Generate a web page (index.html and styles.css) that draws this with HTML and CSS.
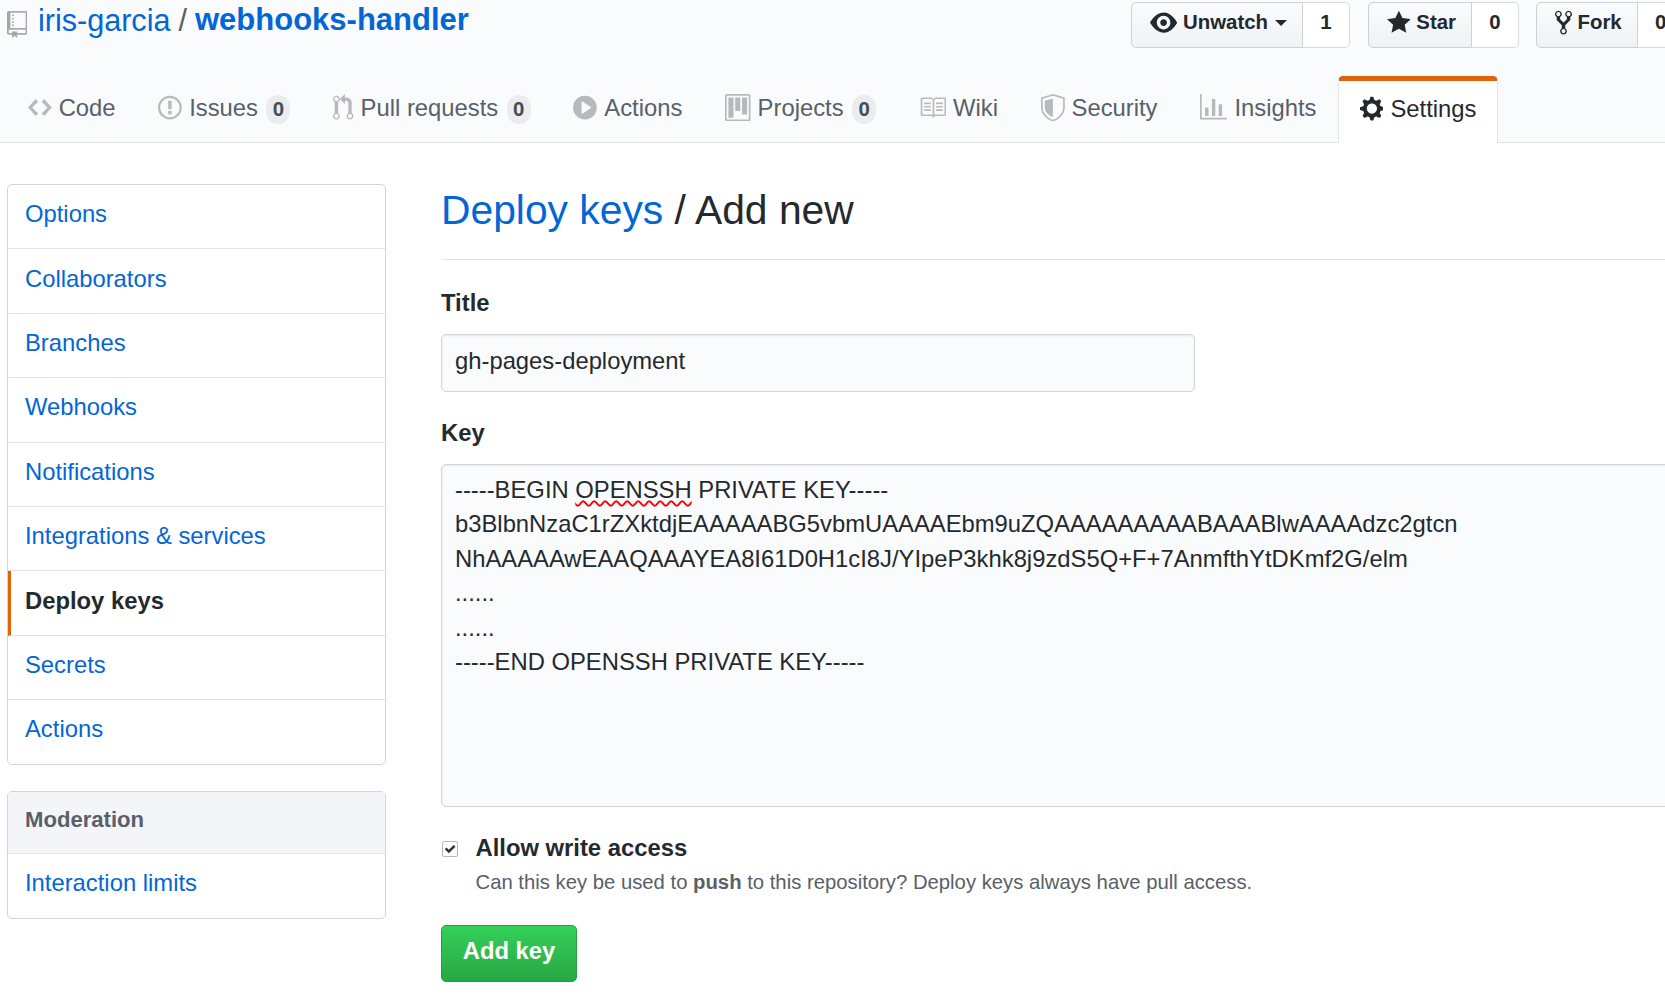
FILE: index.html
```html
<!DOCTYPE html>
<html lang="en">
<head>
<meta charset="utf-8">
<title>Deploy keys / Add new</title>
<link rel="stylesheet" href="styles.css">
</head>
<body>
<div class="page">
  <header class="repohead">
    <div class="repohead-top">
      <h1 class="repo-title">
        <svg class="repo-icon" viewBox="0 0 12 16"><path d="M4 9H3V8h1v1zm0-3H3v1h1V6zm0-2H3v1h1V4zm0-2H3v1h1V2zm8-1v12c0 .55-.45 1-1 1H6v2l-1.5-1.5L3 16v-2H1c-.55 0-1-.45-1-1V1c0-.55.45-1 1-1h10c.55 0 1 .45 1 1zm-1 10H1v2h2v-1h3v1h5v-2zm0-10H2v9h9V1z"/></svg>
        <a class="link owner">iris-garcia</a><span class="sep">/</span><a class="link repo">webhooks-handler</a>
      </h1>
      <ul class="actions">
        <li class="action">
          <span class="btn"><svg class="btn-icon eye" viewBox="0 0 16 16"><path d="M8.06 2C3 2 0 8 0 8s3 6 8.06 6C13 14 16 8 16 8s-3-6-7.94-6zM8 12c-2.2 0-4-1.78-4-4 0-2.2 1.8-4 4-4 2.22 0 4 1.8 4 4 0 2.22-1.78 4-4 4zm2-4c0 1.11-.89 2-2 2-1.11 0-2-.89-2-2 0-1.11.89-2 2-2 1.11 0 2 .89 2 2z"/></svg>Unwatch<i class="caret"></i></span><span class="count">1</span>
        </li>
        <li class="action">
          <span class="btn"><svg class="btn-icon star" viewBox="0 0 14 16"><path d="M14 6l-4.9-.64L7 1 4.9 5.36 0 6l3.6 3.26L2.67 14 7 11.67 11.33 14l-.93-4.74L14 6z"/></svg>Star</span><span class="count">0</span>
        </li>
        <li class="action">
          <span class="btn"><svg class="btn-icon fork" viewBox="0 0 10 16"><path d="M8 1a1.993 1.993 0 0 0-1 3.72V6L5 8 3 6V4.72A1.993 1.993 0 0 0 2 1a1.993 1.993 0 0 0-1 3.72V6.5l3 3v1.78A1.993 1.993 0 0 0 5 15a1.993 1.993 0 0 0 1-3.72V9.5l3-3V4.72A1.993 1.993 0 0 0 8 1zM2 4.2C1.34 4.2.8 3.65.8 3c0-.65.55-1.2 1.2-1.2.65 0 1.2.55 1.2 1.2 0 .65-.55 1.2-1.2 1.2zm3 10c-.66 0-1.2-.55-1.2-1.2 0-.65.55-1.2 1.2-1.2.65 0 1.2.55 1.2 1.2 0 .65-.55 1.2-1.2 1.2zm3-10c-.66 0-1.2-.55-1.2-1.2 0-.65.55-1.2 1.2-1.2.65 0 1.2.55 1.2 1.2 0 .65-.55 1.2-1.2 1.2z"/></svg>Fork</span><span class="count">0</span>
        </li>
      </ul>
    </div>
    <nav class="tabs">
      <a class="tab"><svg class="tab-icon w14" viewBox="0 0 14 16"><path d="M9.5 3L8 4.5 11.5 8 8 11.5 9.5 13 14 8 9.5 3zm-5 0L0 8l4.5 5L6 11.5 2.5 8 6 4.5 4.5 3z"/></svg>Code</a>
      <a class="tab"><svg class="tab-icon w14" viewBox="0 0 14 16"><path d="M7 2.3c3.14 0 5.7 2.56 5.7 5.7s-2.56 5.7-5.7 5.7A5.71 5.71 0 0 1 1.3 8c0-3.14 2.56-5.7 5.7-5.7zM7 1C3.14 1 0 4.14 0 8s3.14 7 7 7 7-3.14 7-7-3.14-7-7-7zm1 3H6v5h2V4zm0 6H6v2h2v-2z"/></svg>Issues<span class="counter">0</span></a>
      <a class="tab"><svg class="tab-icon w12" viewBox="0 0 12 16"><path d="M11 11.28V5c-.03-.78-.34-1.47-.94-2.06C9.46 2.35 8.78 2.03 8 2H7V0L4 3l3 3V4h1c.27.02.48.11.69.31.21.2.3.42.31.69v6.28A1.993 1.993 0 0 0 10 15a1.993 1.993 0 0 0 1-3.72zm-1 2.92c-.66 0-1.2-.55-1.2-1.2 0-.65.55-1.2 1.2-1.2.65 0 1.2.55 1.2 1.2 0 .65-.55 1.2-1.2 1.2zM4 3c0-1.11-.89-2-2-2a1.993 1.993 0 0 0-1 3.72v6.56A1.993 1.993 0 0 0 2 15a1.993 1.993 0 0 0 1-3.72V4.72c.59-.34 1-.98 1-1.72zm-.8 10c0 .66-.55 1.2-1.2 1.2-.65 0-1.2-.55-1.2-1.2 0-.65.55-1.2 1.2-1.2.65 0 1.2.55 1.2 1.2zM2 4.2C1.34 4.2.8 3.65.8 3c0-.65.55-1.2 1.2-1.2.65 0 1.2.55 1.2 1.2 0 .65-.55 1.2-1.2 1.2z"/></svg>Pull requests<span class="counter">0</span></a>
      <a class="tab"><svg class="tab-icon w14" viewBox="0 0 14 16"><path d="M14 8A7 7 0 1 1 0 8a7 7 0 0 1 14 0zm-8.223 3.482l4.599-3.066a.5.5 0 0 0 0-.832L5.777 4.518A.5.5 0 0 0 5 4.934v6.132a.5.5 0 0 0 .777.416z"/></svg>Actions</a>
      <a class="tab"><svg class="tab-icon w15" viewBox="0 0 15 16"><path d="M1 15h13V1H1v14zM14 0H1a1 1 0 0 0-1 1v14a1 1 0 0 0 1 1h13a1 1 0 0 0 1-1V1a1 1 0 0 0-1-1zM2 2h3v12H2V2zm4 0h3v8H6V2zm4 0h3v10h-3V2z"/></svg>Projects<span class="counter">0</span></a>
      <a class="tab"><svg class="tab-icon w16" viewBox="0 0 16 16"><path d="M3 5h4v1H3V5zm0 3h4V7H3v1zm0 2h4V9H3v1zm11-5h-4v1h4V5zm0 2h-4v1h4V7zm0 2h-4v1h4V9zm2-6v9c0 .55-.45 1-1 1H9.5l-1 1-1-1H2c-.55 0-1-.45-1-1V3c0-.55.45-1 1-1h5.5l1 1 1-1H15c.55 0 1 .45 1 1zm-8 .5L7.5 3H2v9h6V3.5zm7-.5H9.5l-.5.5V12h6V3z"/></svg>Wiki</a>
      <a class="tab"><svg class="tab-icon w14" viewBox="0 0 14 16"><path d="M7 0L0 2v6.02C0 12.69 5.31 16 7 16c1.69 0 7-3.31 7-7.98V2L7 0zM1 2.75L7 1.04l6 1.71v5.27C13 12 8.31 15 7 15c-1.31 0-6-3-6-6.98V2.75zM7 2.6L2.2 3.95V8c0 3 3.6 5.6 4.8 5.6V2.6z"/></svg>Security</a>
      <a class="tab"><svg class="tab-icon w16" viewBox="0 0 16 16"><path d="M16 14v1H0V0h1v14h15zM5 13H3V8h2v5zm4 0H7V3h2v10zm4 0h-2V6h2v7z"/></svg>Insights</a>
      <a class="tab tab-selected"><svg class="tab-icon w14" viewBox="0 0 14 16"><path d="M14 8.77v-1.6l-1.94-.64-.45-1.09.88-1.84-1.13-1.13-1.81.91-1.09-.45-.69-1.92h-1.6l-.63 1.94-1.11.45-1.84-.88-1.13 1.13.91 1.81-.45 1.09L0 7.23v1.59l1.94.64.45 1.09-.88 1.84 1.13 1.13 1.81-.91 1.09.45.69 1.92h1.59l.63-1.94 1.11-.45 1.84.88 1.13-1.13-.92-1.81.47-1.09L14 8.75v.02zM7 11c-1.66 0-3-1.34-3-3s1.34-3 3-3 3 1.34 3 3-1.34 3-3 3z"/></svg>Settings</a>
    </nav>
  </header>

  <div class="layout">
    <aside class="sidebar">
      <nav class="menu">
        <a class="menu-item">Options</a>
        <a class="menu-item">Collaborators</a>
        <a class="menu-item">Branches</a>
        <a class="menu-item">Webhooks</a>
        <a class="menu-item">Notifications</a>
        <a class="menu-item">Integrations &amp; services</a>
        <a class="menu-item menu-selected">Deploy keys</a>
        <a class="menu-item">Secrets</a>
        <a class="menu-item">Actions</a>
      </nav>
      <nav class="menu menu-second">
        <div class="menu-heading">Moderation</div>
        <a class="menu-item">Interaction limits</a>
      </nav>
    </aside>

    <main class="content">
      <h2 class="subhead"><a class="link">Deploy keys</a> / Add new</h2>
      <div class="field-label">Title</div>
      <div class="input">gh-pages-deployment</div>
      <div class="field-label key-label">Key</div>
      <div class="textarea">
        <div>-----BEGIN <span class="misspelled">OPENSSH</span> PRIVATE KEY-----</div>
        <div>b3BlbnNzaC1rZXktdjEAAAAABG5vbmUAAAAEbm9uZQAAAAAAAAABAAABlwAAAAdzc2gtcn</div>
        <div>NhAAAAAwEAAQAAAYEA8I61D0H1cI8J/YIpeP3khk8j9zdS5Q+F+7AnmfthYtDKmf2G/elm</div>
        <div>......</div>
        <div>......</div>
        <div>-----END OPENSSH PRIVATE KEY-----</div>
      </div>
      <div class="check-row">
        <span class="checkbox"><svg viewBox="0 0 12 12"><path d="M1.5 6.2l1.5-1.5L5 6.7 9.2 2.5 10.7 4 5 9.7z"/></svg></span>
        <div class="check-text">
          <div class="check-label">Allow write access</div>
          <div class="check-help">Can this key be used to <strong>push</strong> to this repository? Deploy keys always have pull access.</div>
        </div>
      </div>
      <button class="add-btn" type="button">Add key</button>
    </main>
  </div>
</div>
</body>
</html>
```

FILE: styles.css
```css
* { box-sizing: border-box; }
html, body { margin: 0; padding: 0; height: 100%; overflow: hidden; background: #fff; }
body { font-family: "Liberation Sans", Arial, sans-serif; color: #24292e; font-size: 23.8px; }
a { text-decoration: none; }
svg { fill-rule: evenodd; }
.link { color: #0366d6; }
.page { width: 1800px; }

.repohead { background: #fafbfc; border-bottom: 1px solid #e1e4e8; height: 143px; position: relative; }
.repohead-top { display: flex; align-items: flex-start; height: 76px; padding-left: 7px; }
.repo-title { margin: 0; font-size: 30.6px; font-weight: 400; line-height: 40px; display: flex; align-items: center; color: #586069; white-space: nowrap; }
.repo-icon { width: 20.4px; height: 27.2px; fill: #a6a9ac; margin: 9px 10.5px 0 0; display: block; }
.sep { margin: 0 8px; }
.repo { font-weight: 700; font-size: 31px; }

.actions { list-style: none; margin: 2px 0 0 662px; padding: 0; display: flex; gap: 17.5px; }
.action { display: flex; height: 46px; font-size: 20.4px; font-weight: 700; }
.btn { display: flex; align-items: center; padding: 0 15px 5px 18px; border: 1px solid #cdd0d4; border-radius: 5px 0 0 5px; background: linear-gradient(#fafbfc, #eff3f6); white-space: nowrap; }
.count { display: flex; align-items: center; justify-content: center; width: 47px; padding-bottom: 5px; border: 1px solid #d8dade; border-left: 0; border-radius: 0 5px 5px 0; background: #fff; }
.btn-icon { fill: #24292e; display: block; margin-right: 6px; }
.eye { width: 27.2px; height: 27.2px; }
.star { width: 23.8px; height: 27.2px; }
.fork { width: 17px; height: 27.2px; margin-right: 5px; }
.caret { display: inline-block; width: 0; height: 0; margin-left: 7px; border: 6px solid transparent; border-top-color: #24292e; border-bottom: 0; }

.tabs { display: flex; align-items: flex-end; height: 66px; padding-left: 6.5px; }
.tab { display: flex; align-items: center; height: 67px; padding: 0 21.4px 2px; color: #586069; white-space: nowrap; position: relative; }
.tab-icon { display: block; height: 27.2px; fill: #b7babd; margin-right: 7px; }
.w12 { width: 20.4px; }
.w14 { width: 23.8px; }
.w15 { width: 25.5px; }
.w16 { width: 27.2px; }
.counter { display: inline-block; margin: 4px 0 0 8.5px; width: 24px; height: 29px; line-height: 29px; text-align: center; font-size: 20.4px; font-weight: 700; border-radius: 15px; background: #ebecee; color: #444d56; }
.tab-selected { margin-left: 0; margin-bottom: -1px; background: #fff; color: #24292e; border: 1px solid #e1e4e8; border-top: 5px solid #e36209; border-bottom: 0; border-radius: 5px 5px 0 0; padding: 0 20.75px 6px; }
.tab-selected .tab-icon { fill: #24292e; }

.layout { display: flex; align-items: flex-start; }
.sidebar { width: 379px; margin: 41px 0 0 7px; flex: none; }
.menu { border: 1px solid #d1d5da; border-radius: 5px; background: #fff; overflow: hidden; }
.menu-second { margin-top: 26px; }
.menu-item { display: flex; align-items: center; height: 64.4px; padding: 0 0 5px 17px; color: #0366d6; border-bottom: 1px solid #e1e4e8; }
.menu-item:last-child { border-bottom: 0; height: 63.4px; }
.menu-second .menu-item:last-child { height: 64.4px; padding-bottom: 7px; }
.menu-selected { color: #24292e; font-weight: 700; border-left: 3px solid #e36209; padding-left: 14px; }
.menu-heading { display: flex; align-items: center; height: 62.4px; padding: 0 0 5px 17px; background: #f3f5f8; color: #586069; font-size: 22.1px; font-weight: 700; border-bottom: 1px solid #e1e4e8; }

.content { width: 1359px; margin: 43px 0 0 55px; flex: none; }
.subhead { margin: 0; font-size: 40.8px; font-weight: 400; line-height: 48px; padding-bottom: 25px; border-bottom: 1px solid #e1e4e8; }
.field-label { font-weight: 700; line-height: 34px; margin: 26px 0 14px; }
.key-label { margin-top: 24px; }
.input { width: 754px; height: 58px; padding: 9px 13px 0; line-height: 34.4px; background: #fafbfc; border: 1px solid #d1d5da; border-radius: 5px; box-shadow: inset 0 1px 2px rgba(27, 31, 35, .075); }
.textarea { height: 343px; padding: 8px 13px; line-height: 34.4px; background: #fafbfc; border: 1px solid #d1d5da; border-radius: 5px; box-shadow: inset 0 1px 2px rgba(27, 31, 35, .075); white-space: nowrap; }
.misspelled { text-decoration: underline wavy #f00; text-decoration-thickness: 1.6px; text-underline-offset: 2px; }

.check-row { display: flex; align-items: flex-start; margin-top: 26px; }
.checkbox { display: flex; align-items: center; justify-content: center; flex: none; width: 16px; height: 16px; margin: 8px 18px 0 0.5px; border: 1px solid #b9b7b4; border-radius: 2px; background: #fff; }
.checkbox svg { width: 14px; height: 14px; fill: #333; display: block; }
.check-label { font-weight: 700; line-height: 30px; }
.check-help { font-size: 20.3px; color: #586069; line-height: 30px; margin-top: 4px; }
.check-help strong { color: #586069; }
.add-btn { display: block; margin-top: 28px; width: 136px; height: 57px; padding: 0 0 5px; font: 700 23.8px "Liberation Sans", Arial, sans-serif; color: #fff; border: 1px solid #2a9a43; border-radius: 5px; background: linear-gradient(#34d058, #28a745); }
```
